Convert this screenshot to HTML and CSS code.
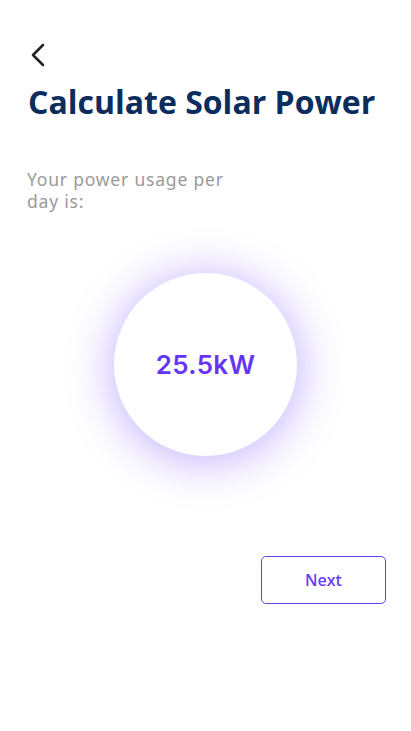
FILE: index.html
```html
<!DOCTYPE html>
<html lang="en">
<head>
<meta charset="utf-8">
<title>Calculate Solar Power</title>
<link rel="stylesheet" href="styles.css">
</head>
<body>
<main class="page">
  <button class="back" aria-label="Back">
    <svg width="16" height="24" viewBox="0 0 16 24"><path d="M13 2 L3 12 L13 22" fill="none" stroke="#222" stroke-width="2.6" stroke-linecap="round" stroke-linejoin="round"/></svg>
  </button>
  <h1 class="title">Calculate Solar Power</h1>
  <p class="subtitle">Your power usage per<br>day is:</p>
  <div class="gauge">
    <div class="circle"><span class="value">25.5kW</span></div>
  </div>
  <div class="actions">
    <button class="next">Next</button>
  </div>
</main>
</body>
</html>
```
FILE: styles.css
```css
html, body {
  margin: 0;
  padding: 0;
  background: #ffffff;
}
.page {
  display: flex;
  flex-direction: column;
  padding: 43px 25px 0 28px;
  font-family: "Open Sans", sans-serif;
}
.back {
  align-self: flex-start;
  background: none;
  border: 0;
  padding: 0;
  margin-left: 2px;
  width: 16px;
  height: 24px;
  display: flex;
}
.title {
  margin: 15px 0 0 0;
  font-family: "Open Sans", sans-serif;
  font-weight: 700;
  font-size: 32px;
  line-height: 40px;
  color: #0b2d5e;
  letter-spacing: 0;
}
.subtitle {
  margin: 46px 0 0 -1px;
  font-family: "Noto Sans", sans-serif;
  font-size: 17.5px;
  line-height: 22px;
  letter-spacing: 0.8px;
  color: #9a9a9a;
}
.gauge {
  display: flex;
  justify-content: center;
  margin-top: 61px;
  margin-left: -28px;
  margin-right: -25px;
}
.circle {
  width: 183px;
  height: 183px;
  border-radius: 50%;
  background: #fff;
  box-shadow: 0 4px 44px 4px rgba(124, 84, 255, 0.42);
  display: flex;
  align-items: center;
  justify-content: center;
}
.value {
  font-family: "Inter", sans-serif;
  font-weight: 600;
  font-size: 26px;
  color: #6535f5;
  letter-spacing: 0.3px;
}
.actions {
  display: flex;
  justify-content: flex-end;
  margin-top: 100px;
}
.next {
  width: 125px;
  height: 48px;
  background: #fff;
  border: 1.3px solid #6a3df5;
  border-radius: 5px;
  color: #6a3df5;
  font-family: "Open Sans", sans-serif;
  font-weight: 600;
  font-size: 16px;
}
```
